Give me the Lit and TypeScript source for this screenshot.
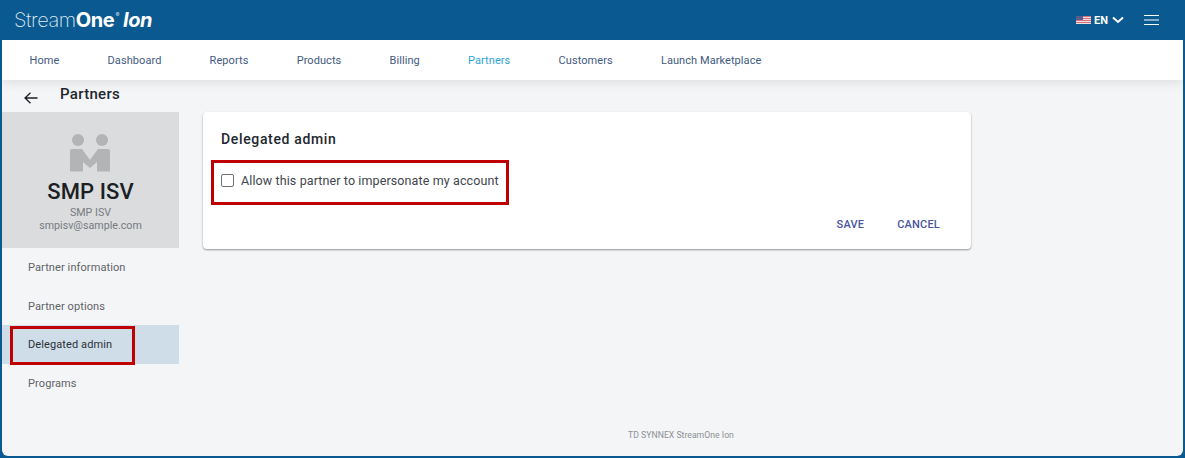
import { LitElement, html, css, svg } from "lit";
import { customElement } from "lit/decorators.js";

const NAV = ["Home", "Dashboard", "Reports", "Products", "Billing", "Partners", "Customers", "Launch Marketplace"];
const SIDE = ["Partner information", "Partner options", "Delegated admin", "Programs"];

@customElement("app-root")
export class AppRoot extends LitElement {
  static styles = css`
    :host { display: block; width: 1185px; height: 458px; overflow: hidden; font-family: Roboto, "Liberation Sans", sans-serif; background: #0a5990; }
    .top { height: 40px; display: flex; align-items: center; padding: 0 26px 0 14px; color: #fff; }
    .logo { font-size: 20px; letter-spacing: -0.4px; color: #fff; font-family: Inter, Roboto, sans-serif; margin-top: -1px; white-space: nowrap; }
    .logo .thin { font-weight: 200; color: #dfe9f1; }
    .logo .bold { font-weight: 700; }
    .logo .reg { font-size: 6px; position: relative; top: -10px; margin: 0 4px 0 1px; color: #cfdde9; }
    .logo .ion { font-weight: 700; font-style: italic; }
    .spacer { flex: 1; }
    .flag { width: 15px; height: 8px; margin-right: 3px; display: block; }
    .lang { font-size: 11px; font-weight: 700; margin-right: 4px; }
    .chev { width: 12px; height: 8px; margin-right: 20px; display: block; }
    .burger { width: 15px; height: 10px; display: block; }
    .frame { margin: 0 2px 2px 2px; height: 416px; background: #f4f5f7; border-radius: 0 0 6px 6px; position: relative; display: flex; flex-direction: column; overflow: hidden; }
    .nav { height: 40px; flex: none; background: #fff; display: flex; align-items: center; gap: 48.2px; padding-left: 27.5px; box-shadow: 0 1px 12px rgba(0,0,0,.12); position: relative; }
    .nav a { font-size: 11px; letter-spacing: .07px; color: #3f5a80; }
    .nav a.on { color: #2ea3d6; }
    .title { height: 32px; flex: none; display: flex; align-items: flex-start; }
    .back { width: 14px; height: 12px; margin: 12px 0 0 22px; display: block; }
    .title h1 { margin: 5px 0 0 22px; font-size: 15px; font-weight: 500; letter-spacing: .3px; color: #22272e; line-height: 18px; }
    .body { display: flex; flex: 1; min-height: 0; }
    .side { width: 177px; flex: none; }
    .profile { height: 136px; background: #dbdcde; display: flex; flex-direction: column; align-items: center; box-sizing: border-box; padding-top: 22px; }
    .profile svg { width: 40px; height: 38px; display: block; margin-left: -1px; }
    .profile .name { font-size: 22px; font-weight: 500; color: #1c1f24; line-height: 24px; margin-top: 8px; letter-spacing: .1px; }
    .profile .sub { font-size: 10.7px; color: #777b80; line-height: 13px; }
    .profile .sub.first { margin-top: 2px; }
    .item { height: 38.5px; box-sizing: border-box; padding-top: 1px; display: flex; align-items: center; padding-left: 26px; font-size: 11px; letter-spacing: .1px; color: #5e6367; position: relative; }
    .item.on { background: #cfdde9; color: #2c3038; }
    .mark { position: absolute; border: 3px solid #c00000; box-sizing: border-box; pointer-events: none; }
    .item .mark { left: 8px; top: 1px; width: 125px; height: 39px; }
    .main { flex: 1; padding-left: 24px; }
    .card { width: 768px; height: 137px; background: #fff; border-radius: 4px; box-shadow: 0 1px 2px rgba(0,0,0,.4); box-sizing: border-box; padding: 18px 31px 0 18px; display: flex; flex-direction: column; position: relative; }
    .card h2 { margin: 0; font-size: 14px; font-weight: 500; letter-spacing: .65px; line-height: 18px; color: #22272e; }
    .check { display: flex; align-items: center; margin-top: 22px; height: 20px; }
    .box { width: 13px; height: 13px; box-sizing: border-box; border: 1px solid #6f7175; border-radius: 2px; margin-right: 7px; }
    .check span { font-size: 12.5px; letter-spacing: .11px; color: #41454d; }
    .card .mark { left: 8px; top: 48px; width: 298px; height: 45px; }
    .actions { display: flex; justify-content: flex-end; gap: 33px; margin-top: 28px; }
    .actions span { font-size: 11px; font-weight: 500; letter-spacing: .2px; color: #4a55a2; line-height: 14px; }
    .foot { position: absolute; left: 0; right: 0; bottom: 16px; font-size: 8.7px; color: #8d9094; text-align: center; padding-left: 177px; box-sizing: border-box; }
  `;

  render() {
    return html`
      <div class="top">
        <div class="logo"><span class="thin">Stream</span><span class="bold">One</span><span class="reg">®</span><span class="ion">Ion</span></div>
        <div class="spacer"></div>
        <svg class="flag" viewBox="0 0 15 8">
          <rect width="15" height="8" fill="#d9707c" />
          ${[1, 3, 5, 7].map((y) => svg`<rect y="${y}" width="15" height="1" fill="#eddfe0" />`)}
          <rect width="7" height="4" fill="#55608f" />
        </svg>
        <span class="lang">EN</span>
        <svg class="chev" viewBox="0 0 12 8"><path d="M1 1.5 6 6l5-4.5" fill="none" stroke="#fff" stroke-width="2" /></svg>
        <svg class="burger" viewBox="0 0 15 10"><path d="M0 .5h15M0 5h15M0 9.5h15" stroke="#fff" stroke-width="1" /></svg>
      </div>
      <div class="frame">
        <div class="nav">${NAV.map((n) => html`<a class=${n === "Partners" ? "on" : ""}>${n}</a>`)}</div>
        <div class="title">
          <svg class="back" viewBox="0 0 14 12"><path d="M13.5 6H1M6.5.7 1 6l5.5 5.3" fill="none" stroke="#1d2126" stroke-width="1.3" /></svg>
          <h1>Partners</h1>
        </div>
        <div class="body">
          <div class="side">
            <div class="profile">
              <svg viewBox="0 0 40 38">
                <circle cx="8" cy="6" r="6" fill="#b3b4b5" />
                <circle cx="32" cy="6" r="6" fill="#b3b4b5" />
                <path d="M0 17a2 2 0 0 1 2-2h10l8 11 8-11h10a2 2 0 0 1 2 2v20.5H27V28l-7 6-7-6v9.5H0z" fill="#b3b4b5" />
              </svg>
              <div class="name">SMP ISV</div>
              <div class="sub first">SMP ISV</div>
              <div class="sub">smpisv@sample.com</div>
            </div>
            ${SIDE.map((s) => html`<div class="item ${s === "Delegated admin" ? "on" : ""}">${s}${s === "Delegated admin" ? html`<div class="mark"></div>` : ""}</div>`)}
          </div>
          <div class="main">
            <div class="card">
              <h2>Delegated admin</h2>
              <div class="check"><div class="box"></div><span>Allow this partner to impersonate my account</span></div>
              <div class="actions"><span>SAVE</span><span>CANCEL</span></div>
              <div class="mark"></div>
            </div>
          </div>
        </div>
        <div class="foot">TD SYNNEX StreamOne Ion</div>
      </div>
    `;
  }
}
